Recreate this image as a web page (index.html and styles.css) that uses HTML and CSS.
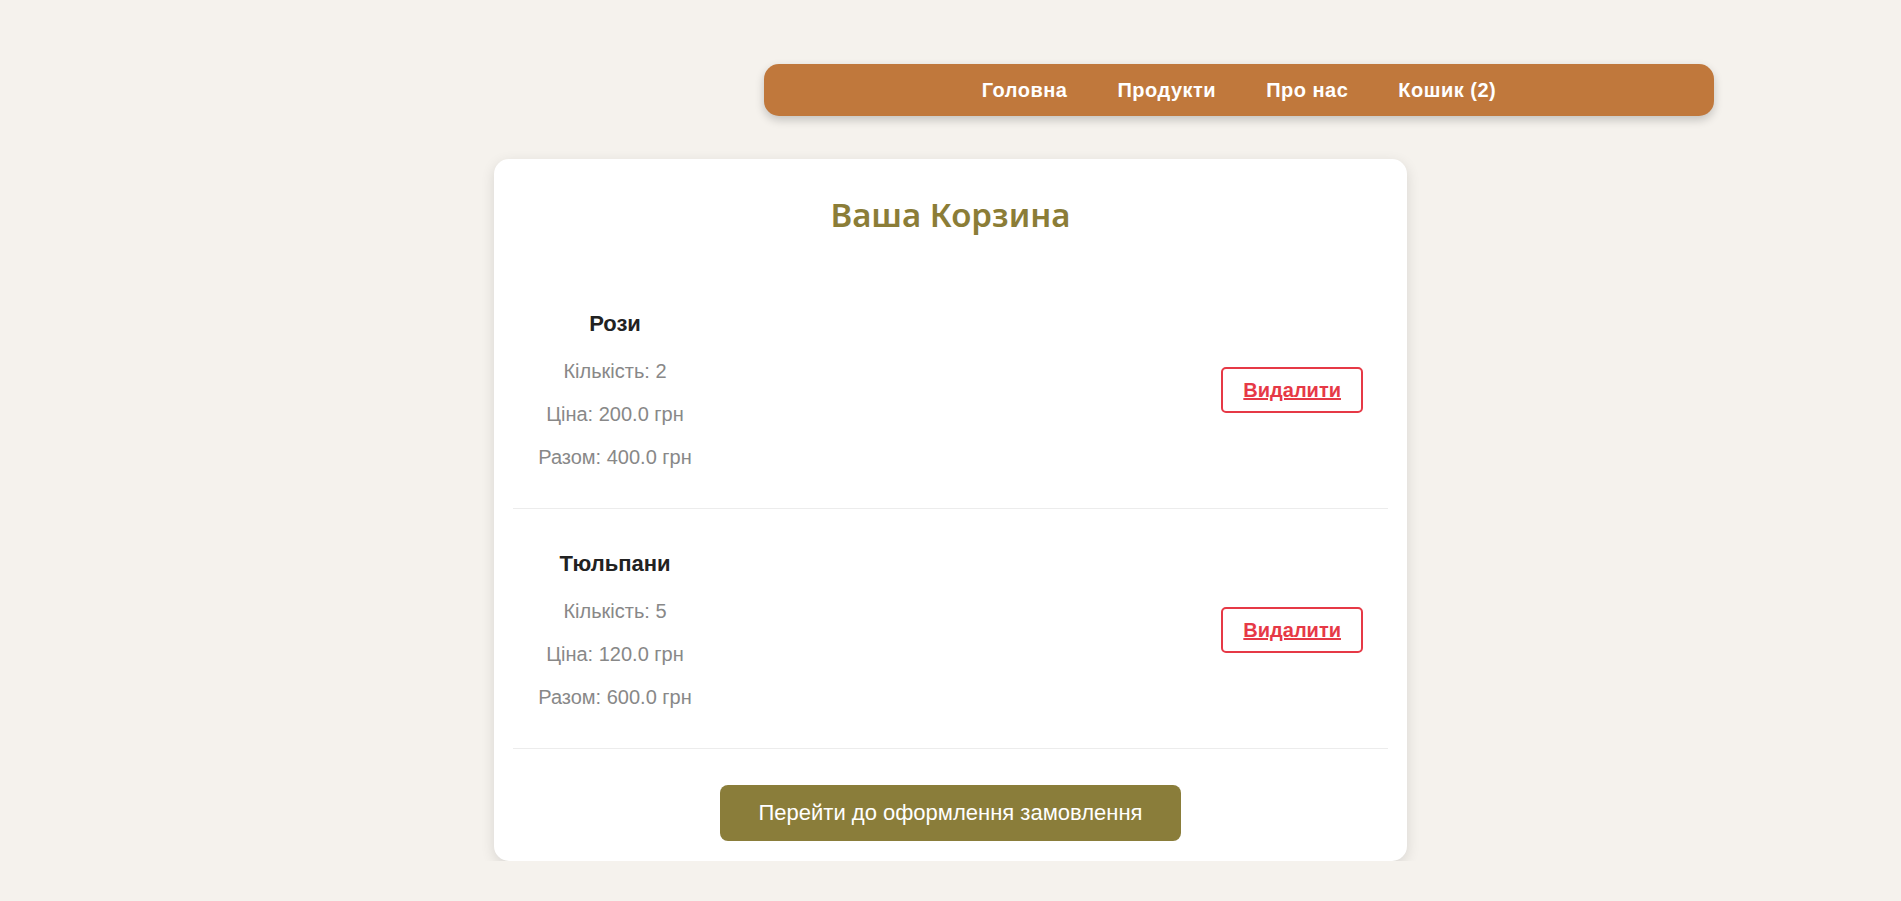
FILE: index.html
```html
<!DOCTYPE html>
<html lang="uk">
<head>
<meta charset="utf-8">
<title>Ваша Корзина</title>
<link rel="stylesheet" href="styles.css">
</head>
<body>
<header class="header">
  <nav class="nav">
    <a class="nav-link" href="#">Головна</a>
    <a class="nav-link" href="#">Продукти</a>
    <a class="nav-link" href="#">Про нас</a>
    <a class="nav-link" href="#">Кошик (2)</a>
  </nav>
</header>
<main class="cart">
  <h2 class="cart-title">Ваша Корзина</h2>
  <div class="cart-item">
    <div class="item-info">
      <h3 class="item-name">Рози</h3>
      <p class="item-line">Кількість: 2</p>
      <p class="item-line">Ціна: 200.0 грн</p>
      <p class="item-line">Разом: 400.0 грн</p>
    </div>
    <a class="remove-btn" href="#">Видалити</a>
  </div>
  <div class="cart-item">
    <div class="item-info">
      <h3 class="item-name">Тюльпани</h3>
      <p class="item-line">Кількість: 5</p>
      <p class="item-line">Ціна: 120.0 грн</p>
      <p class="item-line">Разом: 600.0 грн</p>
    </div>
    <a class="remove-btn" href="#">Видалити</a>
  </div>
  <div class="checkout-wrap">
    <button class="checkout-btn" type="button">Перейти до оформлення замовлення</button>
  </div>
</main>
</body>
</html>
```
FILE: styles.css
```css
* { box-sizing: border-box; }

body {
  margin: 0;
  background: #f5f2ed;
  font-family: "Liberation Sans", Arial, sans-serif;
  color: #333;
}

.header {
  display: flex;
  justify-content: flex-end;
  padding: 64px 187px 0 0;
}

.nav {
  width: 950px;
  height: 52px;
  background: #c0783c;
  border-radius: 15px;
  box-shadow: 0 4px 10px rgba(0, 0, 0, 0.2);
  display: flex;
  justify-content: center;
  align-items: center;
  gap: 50px;
}

.nav-link {
  color: #fff;
  text-decoration: none;
  font-size: 20px;
  font-weight: bold;
  letter-spacing: 0.5px;
}

.cart {
  width: 913px;
  margin: 43px auto 0;
  background: #fff;
  border-radius: 15px;
  box-shadow: 0 4px 14px rgba(0, 0, 0, 0.12);
  padding: 20px 19px 20px;
}

.cart-title {
  margin: 16px 0 34px;
  text-align: center;
  font-family: "Noto Sans", sans-serif;
  font-weight: 600;
  font-size: 33px;
  line-height: 40px;
  color: #8b7d37;
}

.cart-item {
  display: flex;
  justify-content: space-between;
  align-items: center;
  padding: 43px 25px 40px 20px;
  border-bottom: 1px solid #ececec;
}

.item-info {
  width: 164px;
  display: flex;
  flex-direction: column;
  align-items: center;
  text-align: center;
}

.item-name {
  margin: 0 0 24px;
  font-size: 22px;
  line-height: 24px;
  font-weight: bold;
  color: #222;
}

.item-line {
  margin: 0 0 21px;
  font-size: 20px;
  line-height: 22px;
  color: #888;
  white-space: nowrap;
}

.item-line:last-child { margin-bottom: 0; }

.remove-btn {
  display: inline-block;
  border: 2px solid #e63946;
  border-radius: 5px;
  padding: 10px 20px;
  line-height: 22px;
  font-size: 20px;
  font-weight: bold;
  color: #e63946;
  text-decoration: underline;
}

.checkout-wrap {
  display: flex;
  justify-content: center;
  padding-top: 36px;
}

.checkout-btn {
  width: 461px;
  height: 56px;
  border: none;
  border-radius: 8px;
  background: #8a7d3a;
  color: #fff;
  font-family: "Liberation Sans", Arial, sans-serif;
  font-size: 22px;
}
```
